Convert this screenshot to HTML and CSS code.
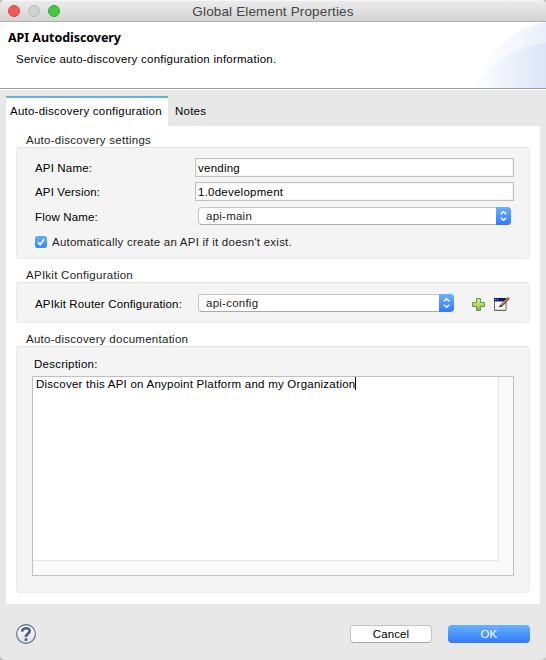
FILE: index.html
```html
<!DOCTYPE html>
<html lang="en">
<head>
<meta charset="utf-8">
<title>Global Element Properties</title>
<link rel="stylesheet" href="styles.css">
</head>
<body>
<div class="window">
  <div class="titlebar">
    <div class="lights"><i class="close"></i><i class="min"></i><i class="max"></i></div>
    <span class="window-title">Global Element Properties</span>
  </div>
  <header class="banner">
    <svg class="swoosh" width="76" height="66" viewBox="0 0 76 66">
      <defs>
        <linearGradient id="g1" x1="0" x2="1"><stop offset="0" stop-color="#fff"/><stop offset="1" stop-color="#edf1fb"/></linearGradient>
        <linearGradient id="g2" x1="0" x2="1"><stop offset="0" stop-color="#f7f9fe"/><stop offset="1" stop-color="#e9eefa"/></linearGradient>
        <linearGradient id="g3" x1="0" x2="1"><stop offset="0" stop-color="#fff"/><stop offset=".5" stop-color="#eef2fc"/><stop offset="1" stop-color="#dce4f6"/></linearGradient>
      </defs>
      <path d="M3 66C16 32 42 6 76 0V66Z" fill="url(#g1)"/>
      <path d="M42 34C50 18 62 5 76 0V34Z" fill="url(#g2)"/>
      <path d="M3 66C19 41 44 25 76 21V66Z" fill="url(#g3)"/>
    </svg>
    <h1 class="heading">API Autodiscovery</h1>
    <p class="subheading">Service auto-discovery configuration information.</p>
  </header>
  <main class="content">
    <nav class="tabs">
      <div class="tab active">Auto-discovery configuration</div>
      <div class="tab">Notes</div>
    </nav>
    <div class="panel">
      <h2 class="group-title">Auto-discovery settings</h2>
      <section class="group settings">
        <div class="row"><label>API Name:</label><div class="input">vending</div></div>
        <div class="row"><label>API Version:</label><div class="input">1.0development</div></div>
        <div class="row flow"><label>Flow Name:</label>
          <div class="select"><span>api-main</span><svg class="stepper" width="15" height="18" viewBox="0 0 15 18"><path d="M4.7 7.3 7.5 4.8 10.3 7.3M4.7 10.7 7.5 13.2 10.3 10.7"/></svg></div>
        </div>
        <div class="check-row">
          <svg class="check" width="12" height="12" viewBox="0 0 12 12"><path d="M3 6.3 5.1 8.8 9 3.2"/></svg>
          <span>Automatically create an API if it doesn't exist.</span>
        </div>
      </section>
      <h2 class="group-title kit-title">APIkit Configuration</h2>
      <section class="group kit">
        <label>APIkit Router Configuration:</label>
        <div class="select small"><span>api-config</span><svg class="stepper" width="15" height="18" viewBox="0 0 15 18"><path d="M4.7 7.3 7.5 4.8 10.3 7.3M4.7 10.7 7.5 13.2 10.3 10.7"/></svg></div>
        <svg class="plus" width="13" height="13" viewBox="0 0 13 13">
          <defs><linearGradient id="gp" x2="0" y2="1"><stop offset="0" stop-color="#e4ea78"/><stop offset=".55" stop-color="#bad75a"/><stop offset="1" stop-color="#6fb63f"/></linearGradient></defs>
          <path d="M4.5.5h4v4h4v4h-4v4h-4v-4h-4v-4h4z" fill="url(#gp)" stroke="#5c9a5c"/>
        </svg>
        <svg class="edit" width="16" height="15" viewBox="0 0 16 15">
          <path d="M.5 1.5h11.500v12H.5z" fill="#fff" stroke="#65665c"/>
          <path d="M1 12.500h10.500" fill="none" stroke="#d9d9cc"/>
          <path d="M0 1h12.500v3H0z" fill="#101674"/><path d="M1 2.500h1M3 2.500h1" stroke="#a9d9f6"/><path d="M1 4.500h10" stroke="#7da5d6"/>
          <path d="M7 8.800 14.800.8" stroke="#5f3d20" stroke-width="2.600"/><path d="M7.300 8 14.400.7" stroke="#cf964f" stroke-width="1.300"/><path d="M5 10 7.600 9.400 6.600 8.300Z" fill="#151515" stroke="#151515" stroke-width=".5"/>
        </svg>
      </section>
      <h2 class="group-title doc-title">Auto-discovery documentation</h2>
      <section class="group docs">
        <label class="description">Description:</label>
        <div class="textarea"><div class="page"><span>Discover this API on Anypoint Platform and my Organization</span><i class="caret"></i></div></div>
      </section>
    </div>
  </main>
  <footer class="footer">
    <svg class="help" width="20" height="20" viewBox="0 0 20 20">
      <defs><linearGradient id="gh" x2="0" y2="1"><stop offset="0" stop-color="#fff"/><stop offset="1" stop-color="#dcdfe3"/></linearGradient></defs>
      <circle cx="10" cy="10" r="9.4" fill="url(#gh)" stroke="#53678a" stroke-width="1.1"/>
      <path d="M6.300 7.600C6 3.200 13.900 3.200 13.700 7.100C13.500 9.900 10 9.400 10 12.900" fill="none" stroke="#4b6088" stroke-width="2.700"/>
      <circle cx="10" cy="15.500" r="1.500" fill="#4b6088"/>
    </svg>
    <div class="button cancel">Cancel</div>
    <div class="button ok">OK</div>
  </footer>
</div>
</body>
</html>
```
FILE: styles.css
```css
* { box-sizing: border-box; }
body { margin: 0; background: #bdbdbd; }
.window {
  width: 546px; height: 660px; overflow: hidden; display: flex; flex-direction: column;
  background: #e8e8e8; border-radius: 5px;
  font: 11.5px/14px "Liberation Sans", Arial, sans-serif; letter-spacing: .24px; color: #000; white-space: nowrap;
}
h1, h2, p { margin: 0; font: inherit; }
.titlebar {
  position: relative; height: 22px; flex: none; display: flex; align-items: center; justify-content: center;
  background: linear-gradient(#ececec, #d3d3d3); border-top: 1px solid #f6f6f6; border-bottom: 1px solid #b1b1b1;
}
.lights { position: absolute; left: 8px; top: 4px; display: flex; gap: 8px; }
.lights i { width: 12px; height: 12px; border-radius: 50%; border: 1px solid #e0443e; background: #f25a55; }
.lights .min { border-color: #bababa; background: #d0d0d0; }
.lights .max { border-color: #2fae30; background: #46c740; }
.window-title { padding-top: 2px; font-size: 13.5px; line-height: 16px; letter-spacing: .15px; color: #444; }
.banner { position: relative; height: 68px; flex: none; background: #fff; border-bottom: 1px solid #fff; padding: 8px; }
.banner::after { content: ""; position: absolute; left: 0; right: 0; bottom: 0; height: 1px; background: #9b9b9b; }
.swoosh { position: absolute; right: 0; top: 0; }
.heading { position: relative; font: bold 12.5px/16px "Noto Sans", sans-serif; letter-spacing: -.05px; }
.subheading { position: relative; margin: 6px 0 0 8px; }
.content { padding: 6px 6px 0; }
.tabs { display: flex; height: 30px; }
.tab { padding: 8px 4px 0 7px; }
.tab.active { width: 162px; padding: 6px 4px 0; border-top: 2px solid #62b2df; background: #fff; }
.panel { width: 534px; height: 478px; padding: 7px 10px 11px; background: #fff; }
.group-title { height: 14px; margin-left: 10px; color: #222; letter-spacing: .27px; }
.group { background: #f4f4f4; border: 1px solid #ebebeb; border-top-color: #e2e2e2; border-radius: 4px; }
.settings { height: 112px; padding: 10px 15px 0 18px; }
.row { display: flex; align-items: flex-start; justify-content: space-between; height: 24px; }
.row label, .kit label { padding-top: 3px; letter-spacing: .16px; }
.input { width: 319px; height: 19px; padding: 2px; background: #fff; border: 1px solid #c0c0c0; box-shadow: inset 0 0 0 1px #f5f5f5; }
.flow { padding: 1px 3px 0 0; height: 30px; }
.select {
  width: 313px; height: 18px; display: flex; justify-content: space-between; padding-left: 7px;
  background: #fff; border: 1px solid #c6c6c6; border-bottom-color: #a9a9a9; border-right: 0; border-radius: 4px; line-height: 16px; color: #222;
}
.stepper { margin: -1px 0; border-radius: 0 4px 4px 0; background: linear-gradient(#69b2fb, #3478fc); fill: none; stroke: #fff; stroke-width: 1.4; flex: none; }
.check-row { display: flex; align-items: center; gap: 5px; height: 14px; margin-top: -1px; color: #222; }
.check { border-radius: 2.5px; background: linear-gradient(#63aefb, #3d86fd); fill: none; stroke: #fff; stroke-width: 1.6; }
.kit-title { margin-top: 9px; }
.kit { height: 41px; display: flex; align-items: flex-start; padding: 11px 0 0 18px; }
.kit label { width: 163px; }
.select.small { width: 256px; }
.plus { margin: 4px 9px 0 18px; }
.edit { margin-top: 3px; }
.doc-title { margin-top: 9px; }
.docs { height: 247px; padding: 10px 15px 0; }
.description { display: block; margin-left: 2px; height: 19px; }
.textarea { width: 482px; height: 200px; border: 1px solid #c0c0c0; background: #fafafa; }
.page { width: 466px; height: 184px; padding: 0 3px; display: flex; background: #fff; border-right: 1px solid #e6e6e6; border-bottom: 1px solid #e6e6e6; }
.caret { width: 1px; height: 13px; background: #000; }
.footer { flex: 1; display: flex; align-items: flex-start; padding: 20px 16px 0; }
.help { margin-right: auto; }
.button { width: 82px; height: 18px; margin-top: 1px; border-radius: 4px; text-align: center; line-height: 16px; letter-spacing: .1px; border: 1px solid #c4c4c4; border-bottom-color: #a8a8a8; background: #fff; }
.ok { margin-left: 16px; border: 0; line-height: 18px; color: #fff; background: linear-gradient(#69b2fb, #4a97fc 50%, #3778fc); }
```
